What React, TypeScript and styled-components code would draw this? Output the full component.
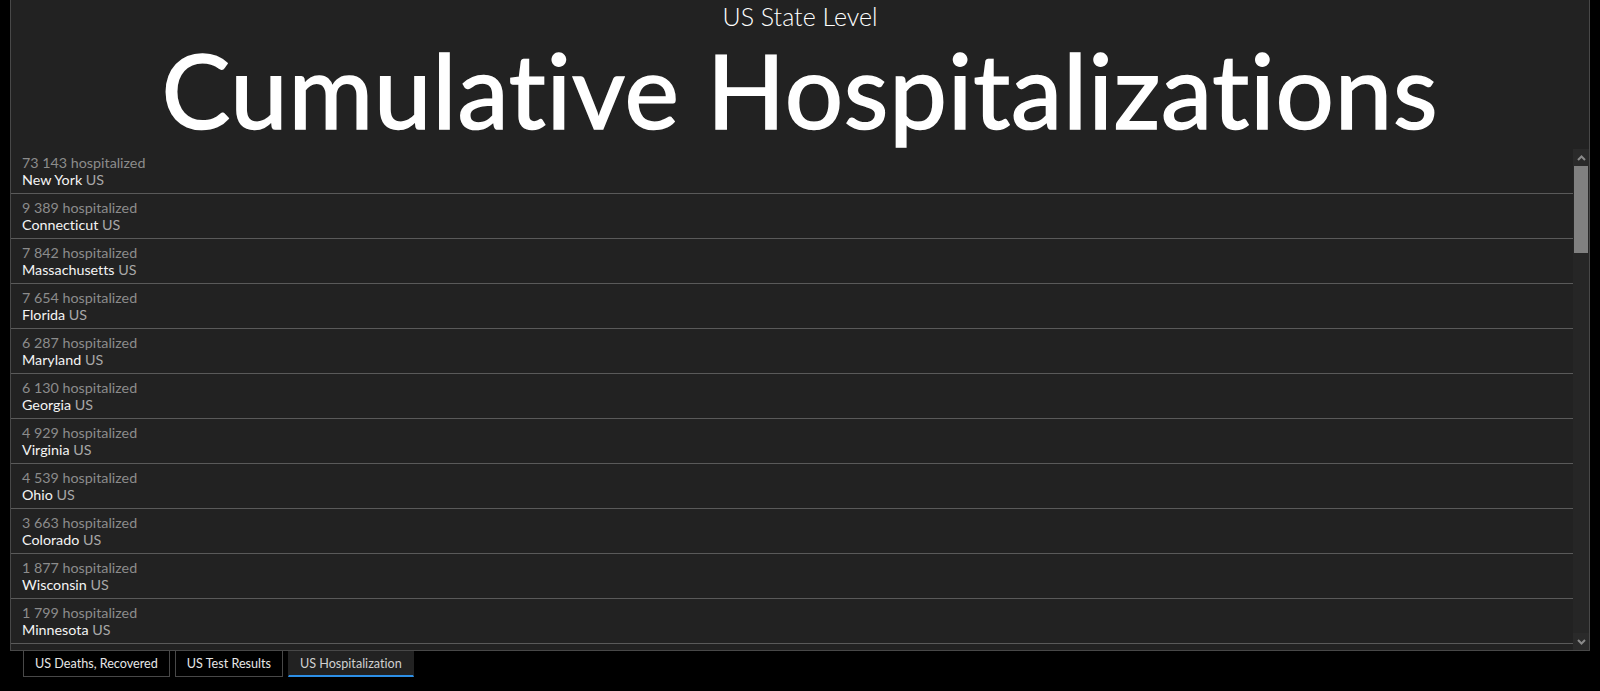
import React from 'react';
import styled, { createGlobalStyle } from 'styled-components';

const GlobalStyle = createGlobalStyle`
    body {
        margin: 0;
        background: #000;
        font-family: Lato, "Noto Sans", sans-serif;
        font-variant-ligatures: none;
    }
`

const Page = styled.div`
    width: 1600px;
    height: 691px;
    display: flex;
    flex-direction: column;
    background: #000;
    overflow: hidden;
`

const Panel = styled.div`
    margin-left: 10px;
    width: 1580px;
    height: 651px;
    box-sizing: border-box;
    background: #222;
    border: 1px solid #484848;
    border-top: none;
    display: flex;
    flex-direction: column;
`

const Header = styled.div`
    height: 149px;
    flex-shrink: 0;
    text-align: center;
    color: #fff;
`

const SubTitle = styled.div`
    padding-top: 2px;
    font-size: 25px;
    line-height: 29px;
    font-weight: 300;
`

const Title = styled.div`
    padding-top: 2px;
    font-size: 103px;
    line-height: 112px;
    font-weight: 400;
    -webkit-text-stroke: 1.6px #fff;
    letter-spacing: 0.8px;
`

const Body = styled.div`
    flex: 1;
    min-height: 0;
    display: flex;
`

const List = styled.div`
    flex: 1;
    overflow: hidden;
    margin-bottom: 6px;
`

const Row = styled.div`
    padding: 5px 11px 5px 11px;
    border-bottom: 1px solid #5a5a5a;
    font-size: 14.3px;
    line-height: 17px;
`

const Count = styled.div`
    color: #8c8c8c;
`

const Name = styled.div`
    color: #f4f4f4;
`

const Country = styled.span`
    color: #a8a8a8;
`

const ScrollBar = styled.div`
    width: 16px;
    flex-shrink: 0;
    display: flex;
    flex-direction: column;
    background: #262626;
`

const ScrollButton = styled.div`
    height: 17px;
    flex-shrink: 0;
    display: flex;
    align-items: center;
    justify-content: center;
    background: #2a2a2a;
`

const Thumb = styled.div`
    height: 87px;
    margin: 0 1px;
    background: #808080;
`

const Spacer = styled.div`
    flex: 1;
`

const Tabs = styled.div`
    display: flex;
    gap: 5px;
    padding-left: 23px;
`

const Tab = styled.div<{ active?: boolean }>`
    height: 26px;
    box-sizing: border-box;
    padding: 0 11px;
    display: flex;
    align-items: center;
    font-size: 12.6px;
    color: ${p => p.active ? '#d0d0d0' : '#e6e6e6'};
    background: ${p => p.active ? '#222' : '#000'};
    border: 1px solid ${p => p.active ? '#222' : '#484848'};
    border-top: none;
    border-bottom: ${p => p.active ? '2px solid #2d8fe6' : '1px solid #484848'};
`

const rows: [number, string][] = [
    [73143, 'New York'],
    [9389, 'Connecticut'],
    [7842, 'Massachusetts'],
    [7654, 'Florida'],
    [6287, 'Maryland'],
    [6130, 'Georgia'],
    [4929, 'Virginia'],
    [4539, 'Ohio'],
    [3663, 'Colorado'],
    [1877, 'Wisconsin'],
    [1799, 'Minnesota'],
    [1755, 'Tennessee'],
    [1566, 'Arizona'],
    [1346, 'Mississippi'],
    [1334, 'Utah'],
    [1197, 'Kentucky'],
    [1162, 'Indiana'],
    [995, 'South Carolina'],
    [918, 'Oklahoma'],
    [804, 'Iowa'],
    [774, 'Oregon'],
    [731, 'Nebraska'],
    [657, 'Kansas'],
    [613, 'Arkansas'],
    [544, 'New Mexico'],
    [508, 'Idaho'],
    [460, 'Rhode Island'],
    [420, 'Delaware'],
    [371, 'New Hampshire'],
    [331, 'Puerto Rico'],
    [267, 'West Virginia'],
    [239, 'Alabama'],
    [188, 'North Dakota'],
    [141, 'Maine'],
    [118, 'Hawaii'],
    [96, 'Montana'],
    [82, 'Wyoming'],
    [67, 'South Dakota'],
    [54, 'Vermont'],
    [42, 'Alaska'],
    [36, 'Guam'],
    [21, 'Virgin Islands'],
    [12, 'Northern Mariana Islands'],
]

function formatCount(n: number) {
    return n.toString().replace(/\B(?=(\d{3})+(?!\d))/g, ' ');
}

function Chevron({ up }: { up?: boolean }) {
    return (
        <svg width="9" height="6" viewBox="0 0 9 6">
            <path
                d={up ? 'M1 5 L4.5 1.5 L8 5' : 'M1 1 L4.5 4.5 L8 1'}
                fill="none"
                stroke="#8a8a8a"
                strokeWidth="2"
            />
        </svg>
    );
}

export default function App() {
    return (
        <Page>
            <GlobalStyle />
            <Panel>
                <Header>
                    <SubTitle>US State Level</SubTitle>
                    <Title>Cumulative Hospitalizations</Title>
                </Header>
                <Body>
                    <List>
                        {rows.map(([count, name]) => (
                            <Row key={name}>
                                <Count>{formatCount(count)} hospitalized</Count>
                                <Name>{name} <Country>US</Country></Name>
                            </Row>
                        ))}
                    </List>
                    <ScrollBar>
                        <ScrollButton><Chevron up /></ScrollButton>
                        <Thumb />
                        <Spacer />
                        <ScrollButton><Chevron /></ScrollButton>
                    </ScrollBar>
                </Body>
            </Panel>
            <Tabs>
                <Tab>US Deaths, Recovered</Tab>
                <Tab>US Test Results</Tab>
                <Tab active>US Hospitalization</Tab>
            </Tabs>
        </Page>
    );
}
